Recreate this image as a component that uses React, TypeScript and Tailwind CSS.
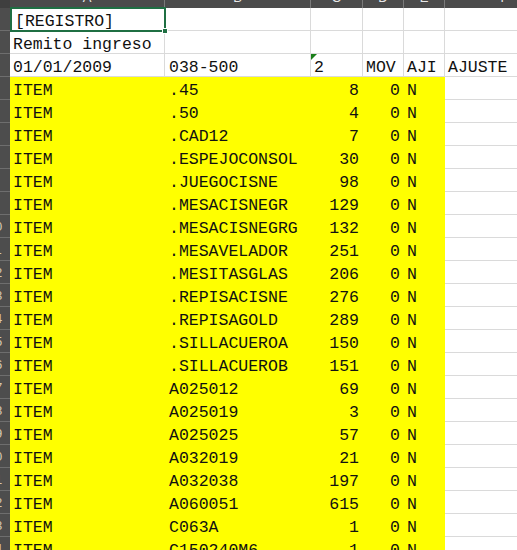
import React from "react";

type Row = {
  a?: string;
  b?: string;
  c?: string;
  d?: string;
  e?: string;
  f?: string;
  fill?: boolean;
  cText?: boolean;
};

const items: [string, string][] = [
  [".45", "8"],
  [".50", "4"],
  [".CAD12", "7"],
  [".ESPEJOCONSOL", "30"],
  [".JUEGOCISNE", "98"],
  [".MESACISNEGR", "129"],
  [".MESACISNEGRG", "132"],
  [".MESAVELADOR", "251"],
  [".MESITASGLAS", "206"],
  [".REPISACISNE", "276"],
  [".REPISAGOLD", "289"],
  [".SILLACUEROA", "150"],
  [".SILLACUEROB", "151"],
  ["A025012", "69"],
  ["A025019", "3"],
  ["A025025", "57"],
  ["A032019", "21"],
  ["A032038", "197"],
  ["A060051", "615"],
  ["C063A", "1"],
  ["C150240M6", "1"],
];

const rows: Row[] = [
  { a: "[REGISTRO]" },
  { a: "Remito ingreso" },
  { a: "01/01/2009", b: "038-500", c: "2", d: "MOV", e: "AJI", f: "AJUSTE", cText: true },
  ...items.map(([b, c]) => ({ a: "ITEM", b, c, d: "0", e: "N", fill: true })),
];

const cols = [
  { key: "A", w: "w-[155px]" },
  { key: "B", w: "w-[146px]" },
  { key: "C", w: "w-[52px]" },
  { key: "D", w: "w-[41px]" },
  { key: "E", w: "w-[41px]" },
  { key: "F", w: "w-[120px]" },
];

const Cell: React.FC<{
  w: string;
  fill?: boolean;
  right?: boolean;
  children?: React.ReactNode;
  extra?: React.ReactNode;
}> = ({ w, fill, right, children, extra }) => (
  <div
    className={`relative ${w} shrink-0 h-full box-border flex items-center overflow-visible whitespace-nowrap ${
      fill ? "bg-[#ffff00] border-transparent" : "bg-white border-r border-b border-[#dadada]"
    } ${right ? "justify-end pr-[4px]" : "pl-[3px]"}`}
  >
    {extra}
    <span className="relative top-[3px]">{children}</span>
  </div>
);

export default function App() {
  return (
    <div className="w-[517px] h-[550px] overflow-hidden bg-white text-[#111] font-['Liberation_Mono',monospace] text-[16.5px] leading-none">
      {/* Column header (scrolled, only the bottom shows) */}
      <div className="flex h-[8px] bg-[#4b4b4b]">
        <div className="w-[10px] shrink-0 bg-[#3f3f3f]" />
        {cols.map((c) => (
          <div
            key={c.key}
            className={`${c.w} shrink-0 h-full overflow-hidden border-r border-[#7a7a7a]`}
          >
            <div className="h-[22px] -mt-[14px] flex items-center justify-center font-['Liberation_Sans',sans-serif] text-[13px] text-[#e8e8e8]">
              {c.key}
            </div>
          </div>
        ))}
      </div>

      {rows.map((r, i) => (
        <div key={i} className="flex h-[23px]">
          {/* Row header, only the right edge is visible */}
          <div className="w-[10px] shrink-0 h-full overflow-hidden flex justify-end bg-[#4d4d4d] border-b border-[#6e6e6e] box-border">
            <div className="w-[30px] shrink-0 flex items-center justify-center font-['Liberation_Sans',sans-serif] text-[13px] text-[#d8c8b0]">
              {i + 1}
            </div>
          </div>

          <Cell w="w-[155px]" fill={r.fill}>
            <span className={i === 0 ? "pl-[2px]" : ""}>{r.a}</span>
          </Cell>
          <Cell w="w-[146px]" fill={r.fill}>
            <span className="pl-[1px]">{r.b}</span>
          </Cell>
          <Cell
            w="w-[52px]"
            fill={r.fill}
            right={!r.cText}
            extra={
              r.cText ? (
                <svg className="absolute left-0 top-0" width="6" height="6" viewBox="0 0 6 6">
                  <polygon points="0,0 6,0 0,6" fill="#1a7f1a" />
                </svg>
              ) : null
            }
          >
            {r.c}
          </Cell>
          <Cell w="w-[41px]" fill={r.fill} right={!!r.fill}>
            {r.d}
          </Cell>
          <Cell w="w-[41px]" fill={r.fill}>
            {r.e}
          </Cell>
          <Cell w="w-[120px]">{r.f}</Cell>
        </div>
      ))}

      {/* Selection border on A1 */}
      <div className="pointer-events-none absolute left-[10px] top-[7px] w-[156px] h-[25px] border-2 border-[#1f6f43]">
        <div className="absolute -right-[4px] -bottom-[4px] w-[6px] h-[6px] bg-[#1f6f43] border border-white" />
      </div>
    </div>
  );
}
